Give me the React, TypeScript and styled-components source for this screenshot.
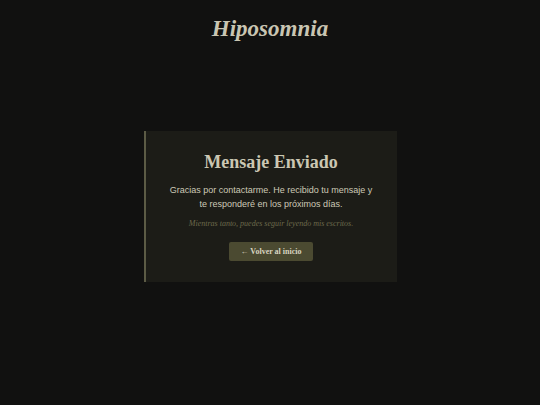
import React from 'react';
import styled, { createGlobalStyle } from 'styled-components';

const GlobalStyle = createGlobalStyle`
  html, body {
    margin: 0;
    padding: 0;
    background: #111110;
  }
  body {
    font-family: "Liberation Serif", "Times New Roman", serif;
    color: #c9c5b2;
  }
`;

const Page = styled.div`
  min-height: 405px;
  display: flex;
  flex-direction: column;
  align-items: center;
`;

const Header = styled.header`
  height: 58px;
  display: flex;
  align-items: center;
  justify-content: center;
`;

const SiteTitle = styled.h1`
  margin: 0;
  font-size: 23px;
  font-weight: 700;
  font-style: italic;
  color: #c9c5b2;
`;

const Main = styled.main`
  padding-top: 73px;
  display: flex;
  justify-content: center;
  width: 100%;
`;

const Card = styled.section`
  width: 253px;
  box-sizing: border-box;
  background: #1c1c17;
  border-left: 2px solid #5c5b45;
  padding: 20px 22px 21px;
  text-align: center;
`;

const CardTitle = styled.h2`
  margin: 0 0 10px;
  font-size: 18px;
  font-weight: 700;
  line-height: 22px;
  color: #cbc7b3;
`;

const Message = styled.p`
  margin: 0 0 8px;
  font-family: "Liberation Sans", Arial, sans-serif;
  font-size: 9px;
  line-height: 14px;
  color: #cdc9b6;
`;

const Note = styled.p`
  margin: 0 0 12px;
  font-size: 8px;
  font-style: italic;
  color: #6c6a4c;
`;

const BackButton = styled.a`
  display: inline-block;
  padding: 5px 12px;
  background: #4b4a31;
  border-radius: 2px;
  font-size: 8px;
  font-weight: 700;
  line-height: 9px;
  color: #d8d4c0;
  text-decoration: none;
  cursor: pointer;
`;

export default function App() {
  return (
    <>
      <GlobalStyle />
      <Page>
        <Header>
          <SiteTitle>Hiposomnia</SiteTitle>
        </Header>
        <Main>
          <Card>
            <CardTitle>Mensaje Enviado</CardTitle>
            <Message>
              Gracias por contactarme. He recibido tu mensaje y te responderé en los próximos días.
            </Message>
            <Note>Mientras tanto, puedes seguir leyendo mis escritos.</Note>
            <BackButton href="#">← Volver al inicio</BackButton>
          </Card>
        </Main>
      </Page>
    </>
  );
}
